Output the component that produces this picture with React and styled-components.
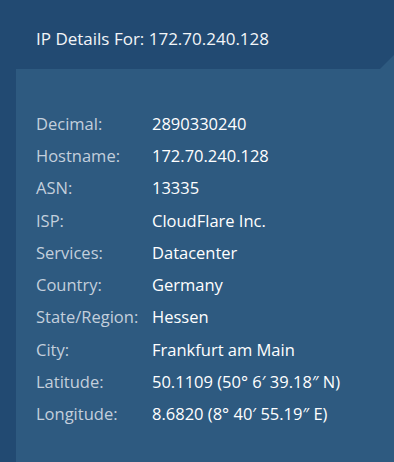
import React from "react";
import styled, { createGlobalStyle } from "styled-components";

const Global = createGlobalStyle`
  html, body { margin: 0; padding: 0; }
  body {
    background: #224a72;
    font-family: "Open Sans", "Noto Sans", sans-serif;
    width: 394px;
    height: 462px;
    overflow: hidden;
  }
`;

const Page = styled.div`
  height: 462px;
  display: flex;
  flex-direction: column;
  background: #224a72;
`;

const Header = styled.h1`
  margin: 0;
  padding: 27px 0 0 36px;
  height: 42px;
  font-size: 17px;
  font-weight: 400;
  line-height: 23px;
  color: #f2f5f8;
`;

const Panel = styled.section`
  position: relative;
  flex: 1;
  margin-left: 16px;
  background: #2e5a80;
  padding: 38px 0 0 20px;

  &::before {
    content: "";
    position: absolute;
    right: 0;
    top: -14px;
    width: 14px;
    height: 14px;
    background: #2e5a80;
    clip-path: polygon(0 100%, 100% 0, 100% 100%);
  }
`;

const Grid = styled.dl`
  margin: 0;
  display: grid;
  grid-template-columns: 116px 1fr;
  grid-auto-rows: 32.3px;
  align-items: center;
`;

const Label = styled.dt`
  font-size: 16.5px;
  font-weight: 400;
  color: #c3cfdc;
  white-space: nowrap;
`;

const Value = styled.dd`
  margin: 0;
  font-size: 16.5px;
  font-weight: 400;
  color: #ffffff;
  white-space: nowrap;
`;

const rows = [
  ["Decimal:", "2890330240"],
  ["Hostname:", "172.70.240.128"],
  ["ASN:", "13335"],
  ["ISP:", "CloudFlare Inc."],
  ["Services:", "Datacenter"],
  ["Country:", "Germany"],
  ["State/Region:", "Hessen"],
  ["City:", "Frankfurt am Main"],
  ["Latitude:", "50.1109 (50° 6′ 39.18″ N)"],
  ["Longitude:", "8.6820 (8° 40′ 55.19″ E)"],
];

export default function App() {
  return (
    <Page>
      <Global />
      <Header>IP Details For: 172.70.240.128</Header>
      <Panel>
        <Grid>
          {rows.map(([k, v]) => (
            <React.Fragment key={k}>
              <Label>{k}</Label>
              <Value>{v}</Value>
            </React.Fragment>
          ))}
        </Grid>
      </Panel>
    </Page>
  );
}
